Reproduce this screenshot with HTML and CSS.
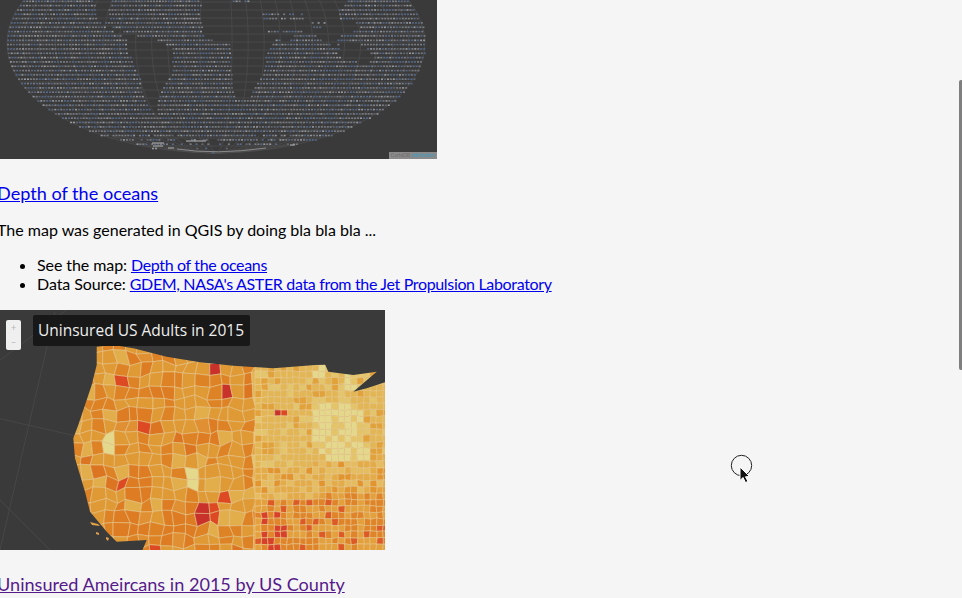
FILE: index.html
```html
<!DOCTYPE html>
<html lang="en">
<head>
<meta charset="utf-8">
<title>Maps</title>
<link rel="stylesheet" href="styles.css">
</head>
<body>
<main class="page">
  <div class="map map-ocean">
    <svg id="ocean" class="map-art" viewBox="-3 0 440 159" width="440" height="159" aria-hidden="true"></svg>
    <div class="attribution">CartoDB <span class="attribution-link">attribution</span></div>
  </div>
  <h3 class="title"><a class="link" href="#ocean">Depth of the oceans</a></h3>
  <p class="intro">The map was generated in QGIS by doing bla bla bla ...</p>
  <ul class="facts">
    <li>See the map: <a class="link link-tight" href="#ocean">Depth of the oceans</a></li>
    <li>Data Source: <a class="link link-tight" href="#ocean">GDEM, NASA's ASTER data from the Jet Propulsion Laboratory</a></li>
  </ul>
  <div class="map map-us">
    <svg id="counties" class="map-art" viewBox="-3 0 388 240" width="388" height="240" aria-hidden="true"></svg>
    <div class="zoom-control"><span class="zoom-btn">+</span><span class="zoom-btn">&minus;</span></div>
    <div class="map-label">Uninsured US Adults in 2015</div>
  </div>
  <h3 class="title title-next"><a class="link link-visited" href="#counties">Uninsured Ameircans in 2015 by US County</a></h3>
</main>
<div class="scroll-thumb"></div>
<svg class="pointer" width="30" height="34" viewBox="0 0 30 34" aria-hidden="true">
  <circle cx="12.500" cy="11.500" r="10.200" fill="#f5f5f5" stroke="#222" stroke-width="1"/>
  <path d="M11 13 L11 26.500 L14 23.500 L16.500 28.500 L19 27.500 L16.500 22.800 L20.500 22.500 Z" fill="#111" stroke="#fff" stroke-width="1"/>
</svg>
<script src="maps.js"></script>
</body>
</html>
```

FILE: styles.css
```css
html, body {
  margin: 0;
  height: 100%;
  overflow: hidden;
  background: #f5f5f5;
}

body {
  font-family: "Lato", "Open Sans", sans-serif;
  font-size: 16px;
  color: #000;
}

.page {
  margin-left: -3px;
}

.map {
  position: relative;
  overflow: hidden;
  background: #3a3a3a;
}

.map-art {
  display: block;
}

.map-ocean {
  width: 440px;
  height: 159px;
}

.map-us {
  width: 388px;
  height: 240px;
  margin-top: 17px;
}

.attribution {
  position: absolute;
  right: 0;
  bottom: 0;
  width: 48px;
  height: 7px;
  background: #8a8a8a;
  color: #6e6e6e;
  font-size: 5px;
  line-height: 7px;
  white-space: nowrap;
  overflow: hidden;
  padding-left: 2px;
  box-sizing: border-box;
  filter: blur(0.4px);
}

.attribution-link {
  color: #3c9cc4;
}

.zoom-control {
  position: absolute;
  left: 9px;
  top: 10px;
  width: 15px;
  height: 30px;
  display: flex;
  flex-direction: column;
  background: #efefef;
  border-radius: 2px;
}

.zoom-btn {
  flex: 1;
  font-size: 9px;
  line-height: 15px;
  text-align: center;
  color: #b5b5b5;
}

.map-label {
  position: absolute;
  left: 36px;
  top: 5px;
  width: 217px;
  height: 31px;
  box-sizing: border-box;
  background: #181818;
  border-radius: 2px;
  color: #eee;
  font-family: "Open Sans", sans-serif;
  font-size: 15.500px;
  line-height: 31px;
  padding-left: 5px;
  white-space: nowrap;
}

.title {
  margin: 22px 0 0;
  font-size: 18.100px;
  line-height: 24px;
  font-weight: 400;
}

.title-next {
  margin-top: 22px;
}

.link {
  color: #0000ee;
  text-decoration: underline;
}

.link-tight {
  letter-spacing: -0.34px;
}

.link-visited {
  color: #551a8b;
}

.intro {
  margin: 15px 0 0;
  line-height: 20px;
}

.facts {
  margin: 15px 0 0;
  padding: 0 0 0 40px;
  line-height: 19px;
  letter-spacing: -0.08px;
}

.scroll-thumb {
  position: fixed;
  right: 0;
  top: 80px;
  width: 3px;
  height: 290px;
  background: #7f7f7f;
  border-radius: 2px 0 0 2px;
}

.pointer {
  position: fixed;
  left: 729px;
  top: 454px;
}
```

FILE: maps.js
```js
(function () {
  var seed = 20150;
  function rnd() {
    seed = (seed * 16807) % 2147483647;
    return seed / 2147483647;
  }
  function third(points, dy) {
    return points.map(function (p) { return [p[0] / 3, (p[1] - (dy || 0)) / 3]; });
  }
  function inside(pt, poly) {
    var hit = false;
    for (var i = 0, j = poly.length - 1; i < poly.length; j = i++) {
      var a = poly[i], b = poly[j];
      if ((a[1] > pt[1]) !== (b[1] > pt[1]) &&
          pt[0] < (b[0] - a[0]) * (pt[1] - a[1]) / (b[1] - a[1]) + a[0]) hit = !hit;
    }
    return hit;
  }
  function pathOf(poly) {
    return 'M' + poly.map(function (p) { return p[0].toFixed(1) + ' ' + p[1].toFixed(1); }).join('L') + 'Z';
  }

  /* Ocean depth dots */
  var ocean = document.getElementById('ocean');
  var cx = 216, cy = 43, rx = 209, ry = 110;
  var land = [
    [[280,0],[335,0],[322,30],[330,55],[300,60],[345,85],[385,100],[370,110],[300,70],[285,35]],
    [[385,100],[480,120],[520,150],[510,185],[515,205],[495,250],[470,300],[465,350],[440,310],[420,240],[400,190],[375,140]],
    [[600,0],[770,0],[785,60],[800,75],[825,110],[795,160],[790,205],[770,245],[745,290],[705,290],[695,230],[690,125],[610,115],[600,40]],
    [[770,0],[1040,0],[1015,50],[1090,75],[1060,90],[1020,110],[1000,140],[940,100],[880,100],[860,130],[825,110],[800,75],[785,60]],
    [[1020,125],[1080,130],[1120,165],[1100,190],[1050,180],[1010,165]]
  ].map(function (p) { return third(p); });
  var seas = [
    [[690,0],[760,0],[760,8],[690,8]], [[780,40],[910,40],[910,56],[780,56]], [[925,55],[975,55],[975,80],[925,80]],
    [[1015,10],[1065,10],[1065,60],[1015,60]], [[800,80],[920,80],[920,95],[800,95]], [[1005,95],[1085,95],[1085,125],[1005,125]],
    [[1010,160],[1140,160],[1140,170],[1010,170]]
  ].map(function (p) { return third(p); });
  var markup = '<defs><filter id="soften"><feGaussianBlur stdDeviation=".4"/></filter></defs><g filter="url(#soften)">';
  var k;
  for (k = 1; k < 26; k++) {
    var grx = rx * k / 13;
    if (grx <= rx + 1) markup += '<ellipse cx="' + cx + '" cy="' + cy + '" rx="' + grx.toFixed(1) + '" ry="' + ry + '" fill="none" stroke="#4e4e4e" stroke-width=".7"/>';
  }
  for (k = 0; k < 20; k++) {
    var ly = k * 8 + 2;
    var dy = (ly - cy) / ry;
    if (Math.abs(dy) < 1) {
      var half = rx * Math.sqrt(1 - dy * dy);
      markup += '<line x1="' + (cx - half).toFixed(1) + '" x2="' + (cx + half).toFixed(1) + '" y1="' + ly + '" y2="' + ly + '" stroke="#4e4e4e" stroke-width=".7"/>';
    }
  }
  for (var row = 0; row < 37; row++) {
    var y = 0.5 + row * 4.33;
    var v = (y - cy) / ry;
    if (Math.abs(v) >= 1) continue;
    var w = rx * Math.sqrt(1 - v * v);
    for (var x = cx - w; x < cx + w; x += 2.95) {
      var onLand = land.some(function (poly) { return inside([x, y], poly); });
      var inSea = seas.some(function (poly) { return inside([x, y], poly); });
      if (onLand && !(inSea && rnd() < 0.55)) continue;
      if (y > 132 && rnd() < (y - 132) / 22) continue;
      var roll = rnd();
      var tone = roll < 0.34 ? '#566887' : (roll < 0.74 ? '#797c83' : (roll < 0.9 ? '#94979c' : '#62666f'));
      markup += '<rect x="' + x.toFixed(1) + '" y="' + y.toFixed(1) + '" width="2" height="1.6" fill="' + tone + '"/>';
    }
  }
  markup += '<path d="M177 149Q216 155 266 148" fill="none" stroke="#8a8a8a" stroke-width="1"/>';
  markup += '<path d="M153 146h10M186 141h20M152 143h12M290 145h5M168 148h6" stroke="#b5b5b5" stroke-width="1"/></g>';
  ocean.innerHTML = markup;

  /* County choropleth */
  var us = document.getElementById('counties');
  var outline = third([[290,125],[340,120],[400,130],[500,155],[600,172],[700,182],[820,190],[975,178],[985,200],[1060,210],[1130,200],[1060,260],[1100,250],[1175,225],[1175,740],[425,740],[440,705],[350,710],[320,680],[270,620],[255,560],[240,510],[225,460],[220,400],[235,360],[255,300],[275,240],[290,180]], 15);
  var hot = [
    [[350,205],[385,215],[385,232],[350,228]], [[640,180],[672,180],[665,218],[640,215]],
    [[425,340],[470,385],[470,400],[425,390]], [[605,605],[650,605],[650,672],[605,672]],
    [[675,235],[715,230],[715,260],[680,258]], [[665,295],[695,300],[695,322],[660,318]],
    [[545,165],[580,170],[575,190],[550,185]], [[600,205],[640,205],[630,228],[600,222]],
    [[825,315],[855,318],[850,340],[830,338]], [[430,710],[470,708],[470,740],[425,740]],
    [[360,530],[385,515],[385,560],[370,550]], [[670,560],[705,565],[700,585],[675,580]]
  ].map(function (p) { return third(p, 15); });
  var pale = [
    [[950,300],[1080,300],[1110,460],[980,470],[930,400]],
    [[1030,200],[1085,215],[1060,262],[1030,250]],
    [[930,190],[980,190],[975,215],[930,215]],
    [[330,160],[375,170],[365,195],[335,190]],
    [[555,500],[600,500],[595,545],[555,540]],
    [[300,395],[338,395],[338,440],[300,440]]
  ].map(function (p) { return third(p, 15); });
  var deep = [[[780,615],[865,615],[865,735],[780,735]]].map(function (p) { return third(p, 15); });
  var dark = [
    [[360,310],[470,310],[460,380],[360,370]], [[385,490],[470,500],[470,590],[400,580]],
    [[350,600],[450,610],[460,710],[360,700]], [[480,580],[600,590],[600,730],[480,720]],
    [[600,355],[670,355],[670,415],[600,415]], [[390,135],[450,150],[440,195],[395,190]],
    [[470,250],[530,245],[520,290],[470,290]], [[700,195],[765,205],[760,230],[700,225]]
  ].map(function (p) { return third(p, 15); });
  function colour(mx, my) {
    var pt = [mx, my];
    var r = rnd();
    function any(list) { return list.some(function (p) { return inside(pt, p); }); }
    if (any(deep)) return r < 0.6 ? '#d8402a' : '#e2842a';
    if (any(hot)) return r < 0.8 ? '#dc4a22' : '#c9322a';
    if (any(pale)) return r < 0.7 ? '#e3d88c' : '#e4c468';
    if (any(dark)) return r < 0.75 ? '#dd7c22' : '#e09030';
    if (mx > 255) {
      var south = (my - 130) / 100 + (mx - 255) * 0.001;
      if (south > 0.62) return r < 0.12 ? '#dd5a26' : (r < 0.6 ? '#e0842a' : '#e3a03c');
      if (south > 0.3) return r < 0.45 ? '#e4ac48' : (r < 0.8 ? '#e5bc5e' : '#e2942f');
      return r < 0.6 ? '#e3b654' : (r < 0.82 ? '#e3c56c' : '#e2a23a');
    }
    return r < 0.3 ? '#de8226' : (r < 0.85 ? '#e09a36' : (r < 0.95 ? '#e2ae4c' : '#dc7424'));
  }
  function mesh(x0, x1, y0, y1, size, jitter, out) {
    var nx = Math.ceil((x1 - x0) / size), ny = Math.ceil((y1 - y0) / size);
    var pts = [], i, j;
    for (j = 0; j <= ny; j++) {
      pts[j] = [];
      for (i = 0; i <= nx; i++) {
        pts[j][i] = [x0 + i * size + (i && i < nx ? (rnd() - 0.5) * jitter : 0), y0 + j * size + (j && j < ny ? (rnd() - 0.5) * jitter : 0)];
      }
    }
    for (j = 0; j < ny; j++) {
      for (i = 0; i < nx; i++) {
        var q = [pts[j][i], pts[j][i + 1], pts[j + 1][i + 1], pts[j + 1][i]];
        var mx = (q[0][0] + q[2][0]) / 2, my = (q[0][1] + q[2][1]) / 2;
        out.push('<path d="' + pathOf(q) + '" fill="' + colour(mx, my) + '"/>');
      }
    }
  }
  var cells = [];
  mesh(70, 262, 30, 240, 11.5, 6, cells);
  mesh(255, 392, 55, 240, 6.4, 1.4, cells);
  var grid = '';
  [[-6, 55, 70, -3], [-3, 108, 76, 126], [55, 2, 0, 240], [0, 190, 50, 240]].forEach(function (l) {
    grid += '<line x1="' + l[0] + '" y1="' + l[1] + '" x2="' + l[2] + '" y2="' + l[3] + '" stroke="#4c4c4c" stroke-width=".7"/>';
  });
  var isles = '<path d="M90 212l8 2 2 2-8-1zM96 222l3 1v2l-3-1zM106 227l3 1-1 3-2-2z" fill="#e2a24a"/>';
  us.innerHTML = grid +
    '<defs><clipPath id="usa"><path d="' + pathOf(outline) + '"/></clipPath>' +
    '<filter id="soft"><feGaussianBlur stdDeviation=".35"/></filter></defs>' + isles +
    '<g clip-path="url(#usa)" filter="url(#soft)" stroke="#eccb8e" stroke-width=".6">' + cells.join('') + '</g>';
})();
```
